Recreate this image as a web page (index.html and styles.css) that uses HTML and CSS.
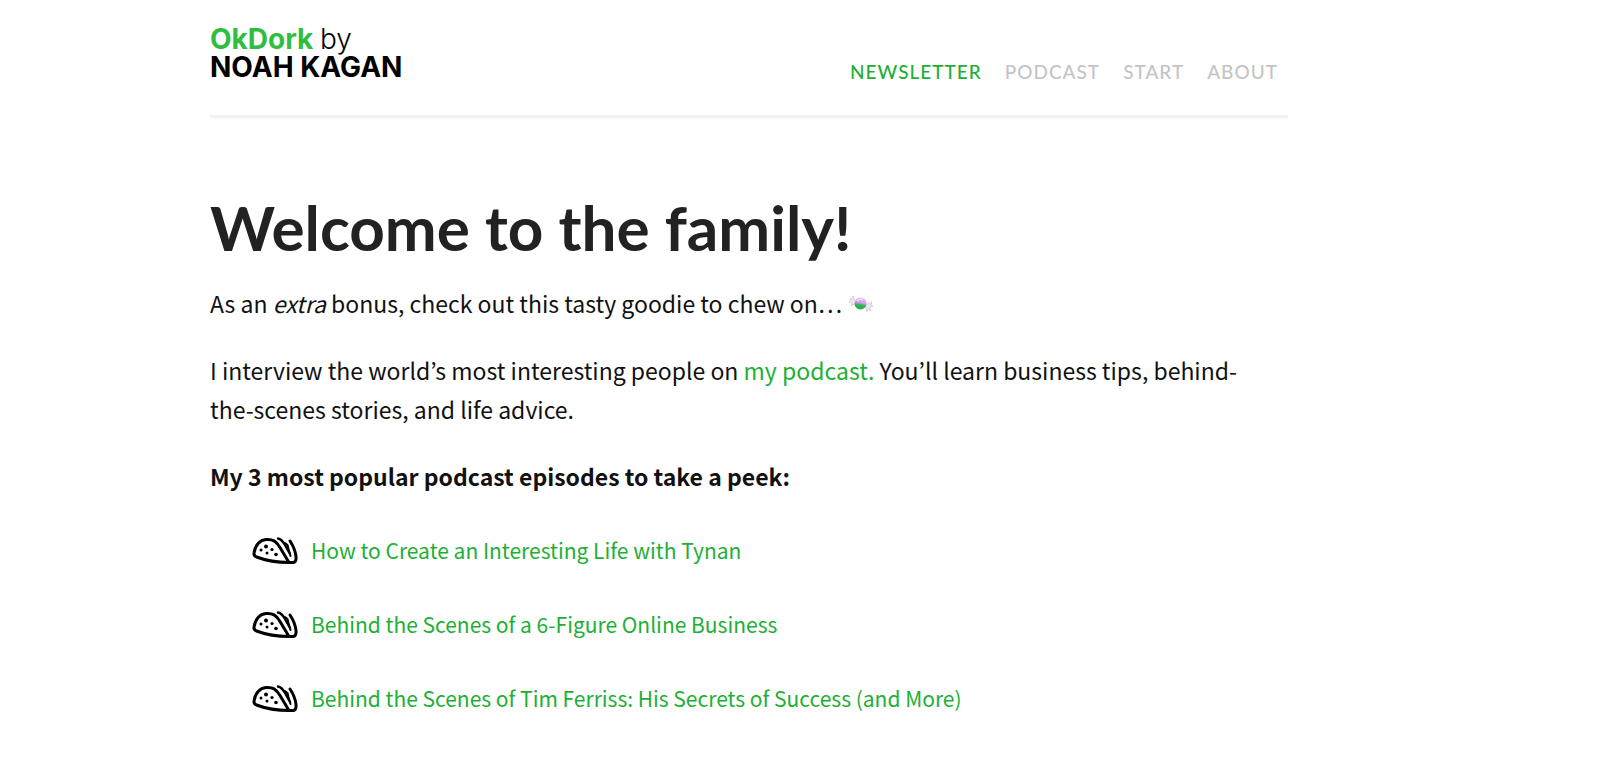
FILE: index.html
```
<!DOCTYPE html>
<html lang="en">
<head>
    <meta charset="utf-8">
    <title>Welcome to the family! - OkDork</title>
    <link rel="stylesheet" href="styles.css">
</head>
<body>
    <!-- taco used as the bullet in the episode list -->
    <svg class="sprite" aria-hidden="true">
        <symbol id="taco" viewBox="0 0 46 28">
            <g fill="none" stroke="#000" stroke-linecap="round" stroke-linejoin="round">
                <path stroke-width="3" d="M2 16C3 8 8 3 14 2.500c7-.5 10 1.500 14 8L37 25.500C26 25.500 15 24 4.500 20 2.500 19 1.700 18 2 16z"/>
                <path stroke-width="3" d="M37 25.500c6 .5 7.500-.5 7-6-.6-6-3-11-6-15.500"/>
                <path stroke-width="2.400" d="M26 1.500c3 .5 5 3 7 6.500l5 9"/>
                <path stroke-width="2" d="M33 6l2.500 2 1 4 2 7"/>
            </g>
            <g fill="#000">
                <circle cx="14" cy="9.500" r="2"/>
                <circle cx="9" cy="13" r="1.500"/>
                <circle cx="20" cy="12.500" r="1.600"/>
                <circle cx="15" cy="16" r="1.500"/>
                <circle cx="24" cy="17.500" r="1.800"/>
            </g>
        </symbol>
    </svg>

    <div class="container">
        <header class="header">
            <a class="logo" href="#">
                <span class="logo-green">OkDork</span> <span class="logo-by">by</span><br>
                NOAH KAGAN
            </a>
            <nav class="nav">
                <a class="active" href="#">NEWSLETTER</a>
                <a href="#">PODCAST</a>
                <a href="#">START</a>
                <a href="#">ABOUT</a>
            </nav>
        </header>

        <main class="content">
            <h1>Welcome to the family!</h1>
            <p>As an <em>extra</em> bonus, check out this tasty goodie to chew on…
                <svg class="candy" viewBox="0 0 24 18" role="img" aria-label="candy">
                    <defs>
                        <linearGradient id="candy-fill" x1="0.6" y1="0" x2="0.4" y2="1">
                            <stop offset="0" stop-color="#e9b8f5"/>
                            <stop offset="0.45" stop-color="#d79ae8"/>
                            <stop offset="0.6" stop-color="#3cb35c"/>
                            <stop offset="1" stop-color="#1fae46"/>
                        </linearGradient>
                    </defs>
                    <path d="M7 8L4 1 3 4 1 3l1 3-2 1 3 1-1 3z" fill="#eee6ee" stroke="#cfc5cf" stroke-width=".7"/>
                    <path d="M16 10l7-3-1 3 2 1-3 1 1 4-3-2-1 3z" fill="#eee6ee" stroke="#cfc5cf" stroke-width=".7"/>
                    <circle cx="11.500" cy="8.500" r="6" fill="url(#candy-fill)"/>
                    <path d="M8 6c2-2 4-2 6-1" fill="none" stroke="#f9e6ff" stroke-width="1.200"/>
                </svg>
            </p>
            <p>I interview the world’s most interesting people on <a href="#">my podcast.</a> You’ll learn business tips, behind-the-scenes stories, and life advice.</p>
            <p><strong>My 3 most popular podcast episodes to take a peek:</strong></p>
            <ul class="episodes">
                <li><svg class="taco" aria-hidden="true"><use href="#taco"/></svg><a href="#">How to Create an Interesting Life with Tynan</a></li>
                <li><svg class="taco" aria-hidden="true"><use href="#taco"/></svg><a href="#">Behind the Scenes of a 6-Figure Online Business</a></li>
                <li><svg class="taco" aria-hidden="true"><use href="#taco"/></svg><a href="#">Behind the Scenes of Tim Ferriss: His Secrets of Success (and More)</a></li>
            </ul>
        </main>
    </div>
</body>
</html>
```
FILE: styles.css
```
body {
    margin: 0;
    background: #fff;
    color: #111;
    font-family: "Noto Sans CJK KR", "Noto Sans", sans-serif;
    font-size: 23px;
    line-height: 39px;
}
a {
    color: #1db035;
    text-decoration: none;
}
.sprite {
    display: none;
}
.container {
    max-width: 1078px;
    margin-left: 210px;
    margin-right: 24px;
}

/* Header */
.header {
    display: flex;
    justify-content: space-between;
    align-items: flex-end;
    padding: 25px 10px 34px 0;
    border-bottom: 3px solid #eff3f3;
}
.logo {
    color: #000;
    font-family: Inter, sans-serif;
    font-size: 28px;
    font-weight: 700;
    line-height: 28px;
}
.logo-green {
    color: #2fbe41;
}
.logo-by {
    font-weight: 300;
}
.nav {
    display: flex;
    gap: 23px;
    font-family: Lato, sans-serif;
    font-size: 19px;
    font-weight: 500;
    line-height: 18px;
    letter-spacing: 1px;
}
.nav a {
    color: #c3c5c4;
}
.nav a.active {
    color: #1db035;
}

/* Page text */
.content {
    padding-right: 24px;
}
h1 {
    margin: 70px 0 18px;
    color: #222;
    font-family: Lato, sans-serif;
    font-size: 62px;
    font-weight: 700;
    line-height: 78px;
}
p {
    margin: 0 0 28px;
}
.candy {
    width: 24px;
    height: 18px;
    margin-left: 2px;
}

/* Episode list */
.episodes {
    margin: 0;
    padding: 0 0 0 42px;
    list-style: none;
    font-size: 21px;
}
.episodes li {
    display: flex;
    align-items: center;
    gap: 13px;
    margin-top: 35px;
}
.taco {
    flex: none;
    width: 46px;
    height: 28px;
}
```
